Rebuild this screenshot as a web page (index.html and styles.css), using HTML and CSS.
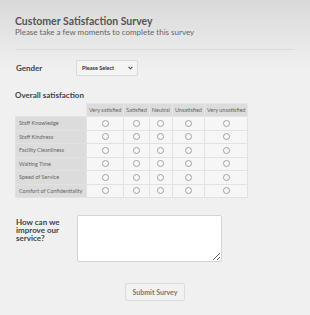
FILE: index.html
```html
<!DOCTYPE html>
<html lang="en">
<head>
    <meta charset="UTF-8">
    <title>Customer Satisfaction Survey</title>
    <link rel="stylesheet" href="styles.css">
</head>
<body>
    <div class="survey">
        <div class="survey-header">
            <h1 class="title">Customer Satisfaction Survey</h1>
            <p class="subtitle">Please take a few moments to complete this survey</p>
        </div>

        <form class="survey-form" onsubmit="return false">
            <div class="field-row">
                <label class="field-label" for="gender">Gender</label>
                <div class="select-wrap">
                    <select id="gender" class="select">
                        <option>Please Select</option>
                        <option>Male</option>
                        <option>Female</option>
                    </select>
                    <svg class="select-arrow" width="5" height="4" viewBox="0 0 5 4">
                        <path d="M0.6 0.8 L2.5 2.8 L4.4 0.8" fill="none" stroke="#444" stroke-width="1.1"/>
                    </svg>
                </div>
            </div>

            <div class="section-title">Overall satisfaction</div>
            <table class="matrix">
                <thead>
                    <tr>
                        <th class="blank"></th>
                        <th>Very satisfied</th>
                        <th>Satisfied</th>
                        <th>Neutral</th>
                        <th>Unsatisfied</th>
                        <th>Very unsatisfied</th>
                    </tr>
                </thead>
                <tbody id="matrixBody"></tbody>
            </table>

            <div class="field-row comment-row">
                <label class="field-label comment-label" for="comment">How can we improve our service?</label>
                <textarea id="comment" class="textarea"></textarea>
            </div>

            <div class="actions">
                <button type="submit" class="submit-btn">Submit Survey</button>
            </div>
        </form>
    </div>

    <script>
        var items = ['Staff Knowledge', 'Staff Kindness', 'Facility Cleanliness',
                     'Waiting Time', 'Speed of Service', 'Comfort of Confidentiality'];
        var body = document.getElementById('matrixBody');
        items.forEach(function(name, i) {
            var tr = document.createElement('tr');
            var th = document.createElement('th');
            th.className = 'row-label';
            th.textContent = name;
            tr.appendChild(th);
            for (var j = 0; j < 5; j++) {
                var td = document.createElement('td');
                var r = document.createElement('input');
                r.type = 'radio';
                r.name = 'q' + i;
                r.className = 'radio';
                td.appendChild(r);
                tr.appendChild(td);
            }
            body.appendChild(tr);
        });
    </script>
</body>
</html>
```

FILE: styles.css
```css
* {
    margin: 0;
    padding: 0;
    box-sizing: border-box;
}

body {
    font-family: 'Lato', 'Liberation Sans', sans-serif;
    background: linear-gradient(to bottom, #d9d9d9 0px, #f0f0f0 70px, #f0f0f0 100%);
    color: #555;
    min-height: 315px;
}

.survey {
    padding: 15px 15px 0 15px;
}

/* header */
.survey-header {
    padding-bottom: 12px;
    border-bottom: 1px solid #dcdcdc;
}

.title {
    font-size: 10.5px;
    font-weight: 700;
    color: #555;
    line-height: 12px;
}

.subtitle {
    font-size: 8px;
    color: #666;
    line-height: 10px;
}

/* fields */
.field-row {
    display: flex;
    align-items: center;
    margin-top: 10px;
}

.field-label {
    width: 61px;
    padding-left: 1px;
    font-size: 8px;
    font-weight: 700;
    color: #444;
}

.select-wrap {
    position: relative;
    width: 62px;
    height: 16px;
}

.select {
    appearance: none;
    -webkit-appearance: none;
    display: block;
    width: 100%;
    height: 100%;
    font-family: inherit;
    font-size: 5.5px;
    font-weight: 700;
    color: #333;
    background: #f4f4f4;
    border: 1px solid #d8d8d8;
    border-radius: 2px;
    padding-left: 5px;
}

.select-arrow {
    position: absolute;
    right: 5px;
    top: 6px;
    pointer-events: none;
}

.section-title {
    font-size: 8px;
    font-weight: 700;
    color: #444;
    margin-top: 14px;
    line-height: 10px;
}

/* matrix */
.matrix {
    border-collapse: collapse;
    margin-top: 3px;
    font-size: 5.5px;
}

.matrix th,
.matrix td {
    border: 1px solid #e2e2e2;
    height: 13.5px;
    text-align: center;
    font-weight: 400;
}

.matrix thead th {
    background: #dcdcdc;
    color: #666;
    padding: 0 2px;
    height: 13px;
    border-color: #e6e6e6;
}

.matrix thead th.blank {
    background: transparent;
    border: none;
}

.matrix .row-label {
    text-align: left;
    background: #dcdcdc;
    color: #666;
    padding: 0 3px;
    width: 71px;
    white-space: nowrap;
}

.matrix td {
    background: #f6f6f6;
}

.radio {
    appearance: none;
    -webkit-appearance: none;
    width: 7px;
    height: 7px;
    border: 1px solid #a0a0a0;
    border-radius: 50%;
    background: #fafafa;
    display: block;
    margin: 0 auto;
}

.radio:checked {
    background: radial-gradient(#555 40%, #fafafa 45%);
}

/* comment */
.comment-row {
    align-items: flex-start;
    margin-top: 17px;
}

.comment-label {
    width: 62px;
    line-height: 8px;
    padding-top: 3px;
    padding-right: 10px;
}

.textarea {
    width: 145px;
    height: 47px;
    background: #fff;
    border: 1px solid #d4d4d4;
    border-radius: 2px;
    resize: vertical;
}

/* button */
.actions {
    display: flex;
    justify-content: center;
    margin-top: 21px;
}

.submit-btn {
    font-family: inherit;
    font-size: 7px;
    font-weight: 700;
    color: #777;
    background: #f2f2f2;
    border: 1px solid #dcdcdc;
    border-radius: 2px;
    width: 60px;
    height: 18px;
    cursor: pointer;
}
```
